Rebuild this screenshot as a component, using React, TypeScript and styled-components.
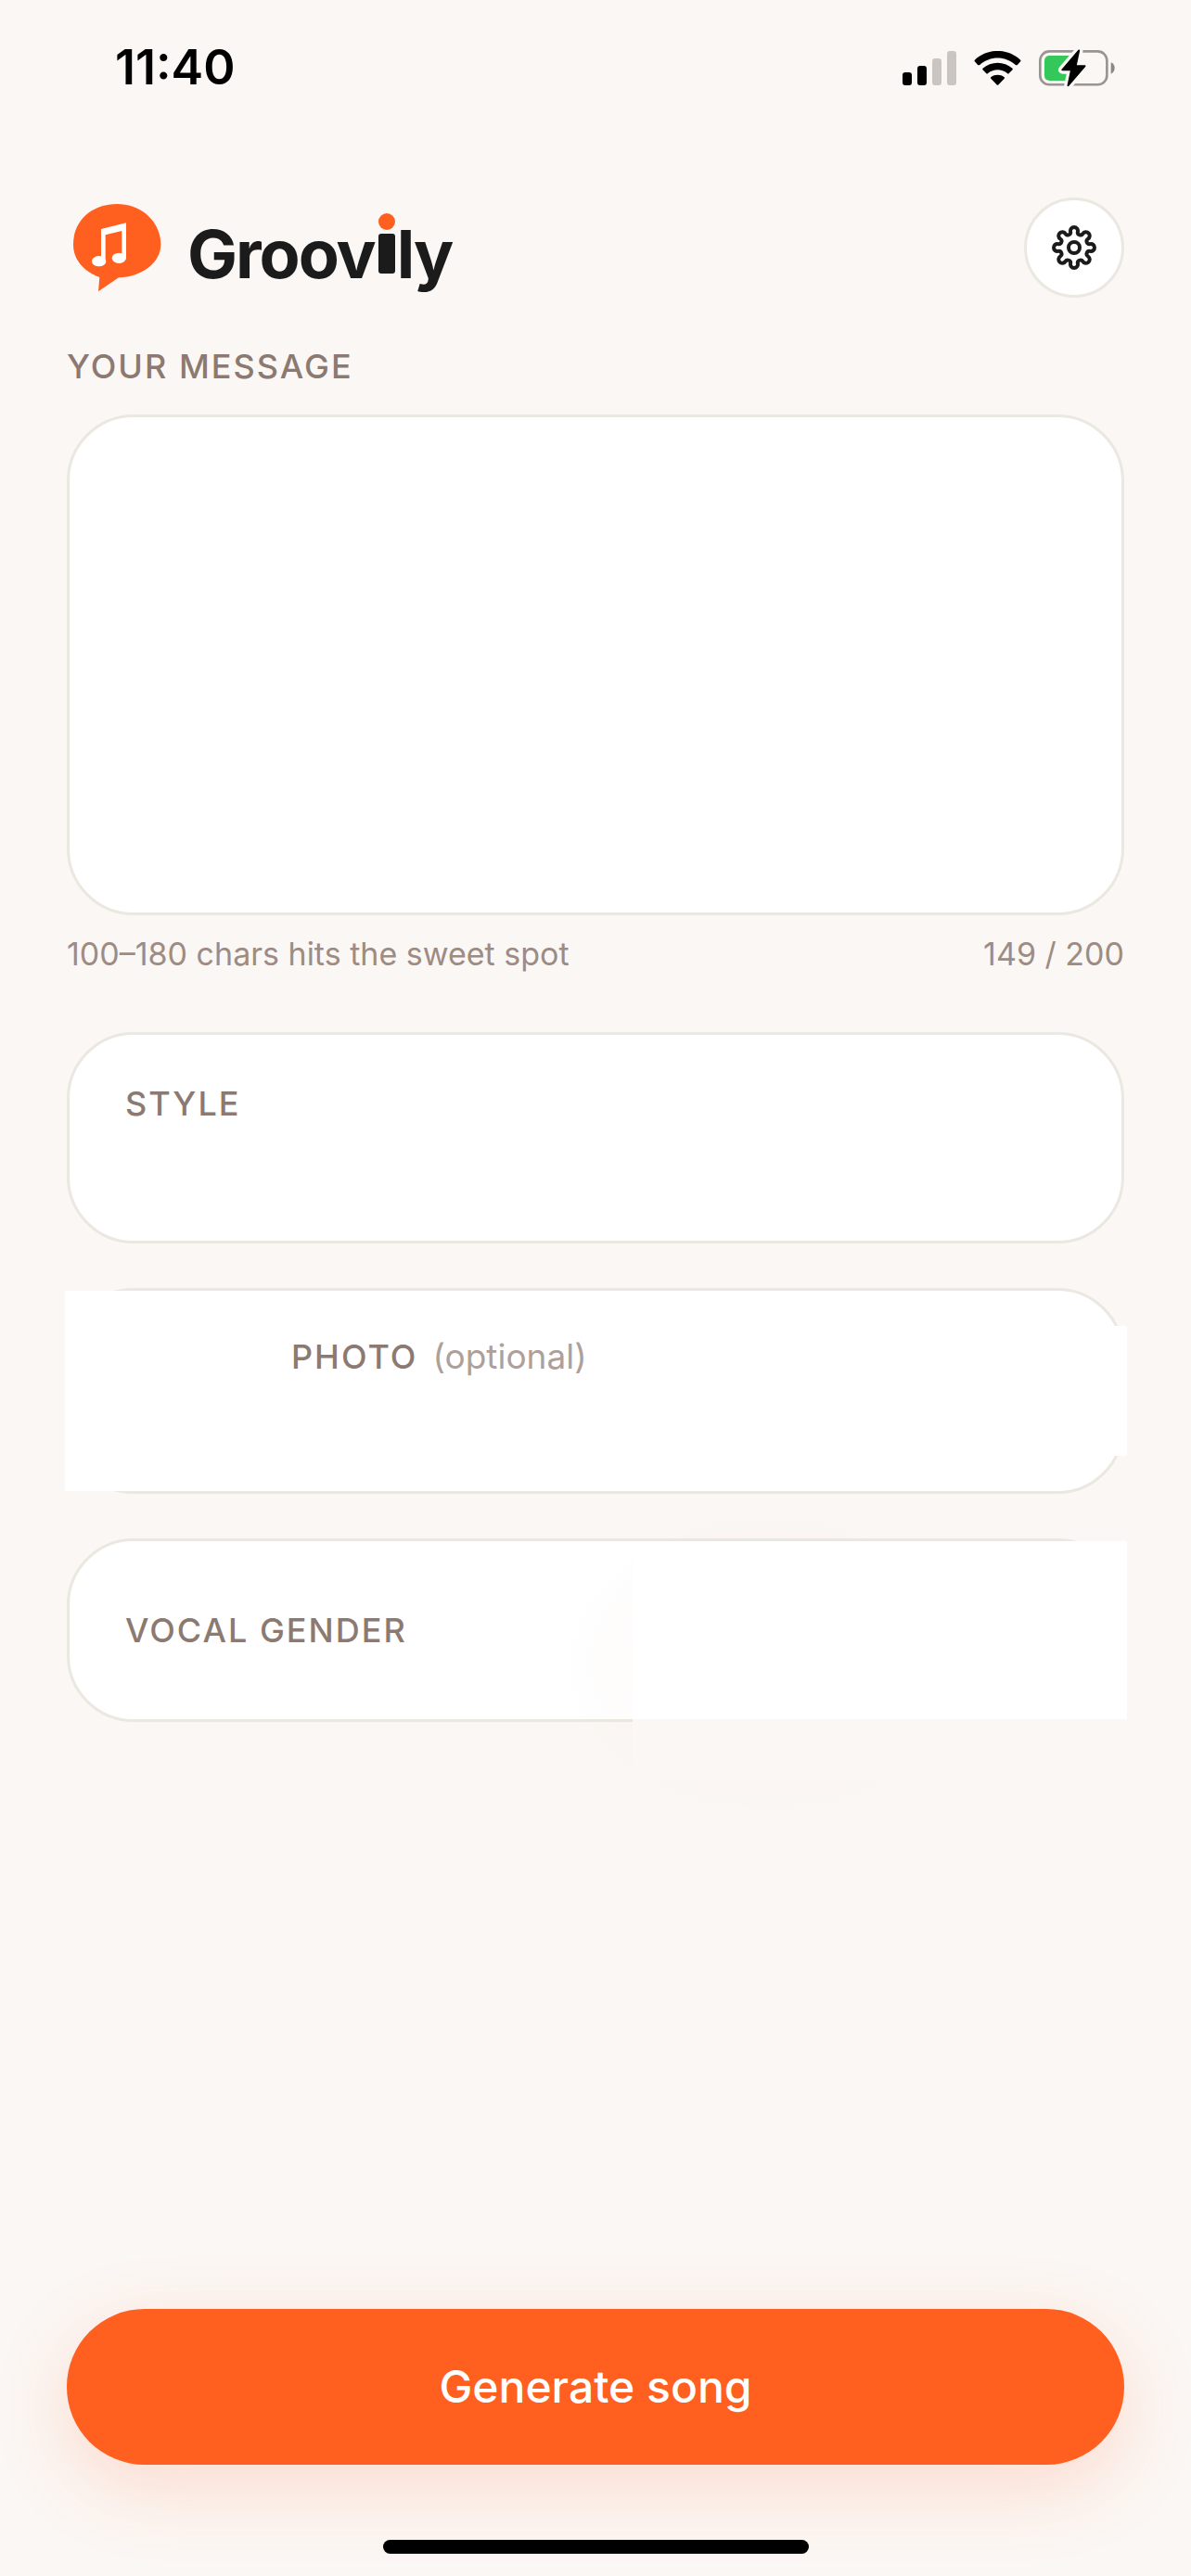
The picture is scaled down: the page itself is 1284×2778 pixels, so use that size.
import React from "react";
import styled, { createGlobalStyle } from "styled-components";

const color = {
  page: "#fbf7f4",
  card: "#ffffff",
  border: "#ebe8e1",
  ink: "#1b1b1b",
  label: "#8c7a72",
  hint: "#9d8c84",
  faint: "#ada09b",
  accent: "#ff5f1f",
};

const GlobalStyle = createGlobalStyle`
  *, *::before, *::after { box-sizing: border-box; }
  body {
    margin: 0;
    background: ${color.page};
    font-family: Inter, "Liberation Sans", sans-serif;
  }
  button, textarea { font: inherit; }
`;

const Screen = styled.div`
  display: flex;
  flex-direction: column;
  min-height: 100vh;
  background: ${color.page};
`;

const StatusBar = styled.div`
  display: flex;
  align-items: center;
  justify-content: space-between;
  height: 146px;
  padding: 0 82px 0 124px;
  color: #000;
`;

const Clock = styled.time`
  font-size: 52px;
  line-height: 60px;
  font-weight: 600;
`;

const StatusIcons = styled.div`
  display: flex;
  align-items: center;
  gap: 19px;
  svg { display: block; }
`;

const Main = styled.main`
  display: flex;
  flex: 1;
  flex-direction: column;
  padding: 67px 72px 24px;
`;

const Header = styled.header`
  display: flex;
  align-items: center;
  justify-content: space-between;
  padding-left: 6px;
  margin-bottom: 52px;
`;

const Brand = styled.h1`
  display: flex;
  align-items: center;
  gap: 28px;
  margin: 0;
  svg { display: block; }
`;

const Wordmark = styled.span`
  display: flex;
  align-items: baseline;
  padding-top: 14px;
  color: ${color.ink};
  font-size: 72px;
  line-height: 88px;
  font-weight: 700;
  letter-spacing: -2px;
`;

const BrandI = styled.svg`
  align-self: flex-start;
  margin: 0 2px 0 4px;
`;

const SettingsButton = styled.button`
  display: grid;
  place-items: center;
  width: 108px;
  height: 108px;
  padding: 0;
  border: 3px solid ${color.border};
  border-radius: 50%;
  background: ${color.card};
  color: ${color.ink};
`;

const Label = styled.span`
  color: ${color.label};
  font-size: 36px;
  line-height: 44px;
  font-weight: 500;
  letter-spacing: 2px;
  text-transform: uppercase;
`;

const Optional = styled.span`
  margin-left: 16px;
  color: ${color.faint};
  font-size: 37px;
  line-height: 44px;
`;

const MessageBox = styled.textarea`
  display: block;
  width: 100%;
  height: 540px;
  margin-top: 30px;
  padding: 48px 60px;
  border: 3px solid ${color.border};
  border-radius: 72px;
  outline: none;
  resize: none;
  background: ${color.card};
  color: ${color.ink};
  font-size: 48px;
`;

const MessageMeta = styled.div`
  display: flex;
  justify-content: space-between;
  margin: 22px 0 64px;
  color: ${color.hint};
  font-size: 34px;
  line-height: 40px;
`;

const Cards = styled.div`
  display: flex;
  flex-direction: column;
  gap: 48px;
`;

const Card = styled.section<{ $height: number }>`
  position: relative;
  display: flex;
  align-items: stretch;
  min-height: ${(p) => p.$height}px;
  border: 3px solid ${color.border};
  border-radius: 72px;
  background: ${color.card};
`;

const StyleButton = styled.button`
  flex: 1;
  display: flex;
  align-items: flex-start;
  padding: 52px 60px;
  border: 0;
  border-radius: 69px;
  background: none;
  text-align: left;
`;

const PhotoThumb = styled.div`
  width: 244px;
  margin-left: -5px;
  background: ${color.card};
`;

const PhotoTitle = styled.div`
  flex: 1;
  padding-top: 49px;
`;

const PhotoAction = styled.div`
  align-self: center;
  width: 140px;
  height: 140px;
  margin-right: -6px;
  background: ${color.card};
`;

const TouchGlow = styled.div`
  position: absolute;
  left: 47%;
  top: -28px;
  width: 440px;
  height: 320px;
  border-radius: 50%;
  background: radial-gradient(closest-side, rgba(255, 95, 31, 0.04), rgba(160, 120, 90, 0.006) 94%, transparent);
  pointer-events: none;
`;

const VocalTitle = styled.div`
  flex: 1;
  display: flex;
  align-items: center;
  padding-left: 60px;
`;

const VocalControl = styled.div`
  position: relative;
  width: 47%;
  margin-right: -6px;
  background: ${color.card};
  box-shadow: 0 66px 0 ${color.page};
`;

const GenerateButton = styled.button`
  height: 168px;
  margin-top: auto;
  border: 0;
  border-radius: 84px;
  background: ${color.accent};
  color: #fff;
  font-size: 48px;
  line-height: 60px;
  font-weight: 500;
  box-shadow: 0 24px 84px rgba(255, 95, 31, 0.18);
`;

const HomeIndicator = styled.div`
  align-self: center;
  width: 459px;
  max-width: 60%;
  height: 15px;
  margin-top: 81px;
  border-radius: 8px;
  background: #000;
`;

const Signal = () => (
  <svg width="58" height="37" viewBox="0 0 58 37" role="img" aria-label="Signal">
    <rect x="0" y="23" width="10" height="14" rx="3" fill="#000" />
    <rect x="16" y="16" width="10" height="21" rx="3" fill="#000" />
    <rect x="32" y="8" width="10" height="29" rx="3" fill="#cac5c2" />
    <rect x="48" y="0" width="10" height="37" rx="3" fill="#cac5c2" />
  </svg>
);

const Wifi = () => (
  <svg width="51" height="37" viewBox="301 72 152 111" role="img" aria-label="Wi-Fi">
    <path d="M303 101C344 62 410 62 451 101Q453 104 451 106L441 117Q438 119 435 117C402 87 352 87 319 117Q316 119 313 117L303 106Q301 104 303 101Z" />
    <path d="M329 128C356 104 398 104 425 128Q427 131 425 133L414 144Q411 147 408 144C390 129 364 129 346 144Q343 147 340 144L329 133Q327 131 329 128Z" />
    <path d="M356 156C368 147 386 147 398 156Q401 159 398 162L380 181Q377 184 374 181L356 162Q353 159 356 156Z" />
  </svg>
);

const Battery = () => (
  <svg width="82" height="41" viewBox="510 66 247 123" role="img" aria-label="Charging">
    <rect x="514" y="73" width="217" height="108" rx="30" fill="none" stroke="#999593" strokeWidth="8" />
    <path d="M744 109C752 113 756 119 756 127S752 142 744 146Z" fill="#8a8785" />
    <path d="M546 87H622V168H546Q528 168 528 150V105Q528 87 546 87Z" fill="#34c759" />
    <path
      d="M638 68L584 131Q581 136 587 136H612L602 184Q603 190 608 185L661 123Q664 118 659 118H633L643 71Q643 65 638 68Z"
      fill="#000"
      stroke={color.page}
      strokeWidth="20"
      strokeLinejoin="round"
      paintOrder="stroke"
    />
  </svg>
);

const Logo = () => (
  <svg width="96" height="96" viewBox="54 56 288 288" aria-hidden="true">
    <path
      d="M57 190C57 112 118 59 198 59C280 59 340 118 340 190C340 248 280 294 204 297L138 342L142 296C90 276 57 238 57 190Z"
      fill={color.accent}
    />
    <path d="M147 140L228 120V234H214V146L161 159V244H147Z" fill="#fff" />
    <ellipse cx="140" cy="244" rx="23" ry="17" fill="#fff" />
    <ellipse cx="205" cy="234" rx="23" ry="17" fill="#fff" />
  </svg>
);

// Eight round teeth joined by smaller round notches.
const gearPath = () => {
  const at = (radius: number, turn: number) => [
    radius * Math.sin(turn * Math.PI),
    -radius * Math.cos(turn * Math.PI),
  ];
  const tooth = 4;
  const notch = 3;
  const join = (a: number[], b: number[]) =>
    a.map((v, i) => (v + ((b[i] - v) * tooth) / (tooth + notch)).toFixed(2)).join(" ");
  let d = "";
  for (let i = 0; i < 8; i++) {
    const center = at(18, i / 4);
    const start = join(center, at(17.9, i / 4 - 1 / 8));
    const end = join(center, at(17.9, i / 4 + 1 / 8));
    d += i === 0 ? `M${start}` : `A${notch} ${notch} 0 0 0 ${start}`;
    d += `A${tooth} ${tooth} 0 1 1 ${end}`;
  }
  return `${d}A${notch} ${notch} 0 0 0 ${join(at(18, 0), at(17.9, -1 / 8))}Z`;
};

const Gear = () => (
  <svg width="54" height="54" viewBox="-27 -27 54 54" fill="none" stroke="currentColor" strokeWidth="4" aria-hidden="true">
    <path d={gearPath()} strokeLinejoin="round" />
    <circle r="6" />
  </svg>
);

export default function App() {
  return (
    <Screen>
      <GlobalStyle />
      <StatusBar>
        <Clock>11:40</Clock>
        <StatusIcons>
          <Signal />
          <Wifi />
          <Battery />
        </StatusIcons>
      </StatusBar>
      <Main>
        <Header>
          <Brand aria-label="Groovily">
            <Logo />
            <Wordmark>
              Groov
              <BrandI width="18" height="65" viewBox="0 0 18 65" aria-hidden="true">
                <circle cx="9" cy="9" r="9" fill={color.accent} />
                <rect y="22" width="18" height="43" rx="3" fill={color.ink} />
              </BrandI>
              ly
            </Wordmark>
          </Brand>
          <SettingsButton aria-label="Settings">
            <Gear />
          </SettingsButton>
        </Header>

        <Label as="label" htmlFor="message">Your message</Label>
        <MessageBox id="message" maxLength={200} />
        <MessageMeta>
          <span>100–180 chars hits the sweet spot</span>
          <output htmlFor="message">149 / 200</output>
        </MessageMeta>

        <Cards>
          <Card $height={228}>
            <StyleButton>
              <Label>Style</Label>
            </StyleButton>
          </Card>
          <Card $height={222}>
            <PhotoThumb />
            <PhotoTitle>
              <Label>Photo</Label>
              <Optional>(optional)</Optional>
            </PhotoTitle>
            <PhotoAction />
          </Card>
          <Card $height={198}>
            <TouchGlow />
            <VocalTitle>
              <Label>Vocal gender</Label>
            </VocalTitle>
            <VocalControl />
          </Card>
        </Cards>

        <GenerateButton>Generate song</GenerateButton>
        <HomeIndicator />
      </Main>
    </Screen>
  );
}
